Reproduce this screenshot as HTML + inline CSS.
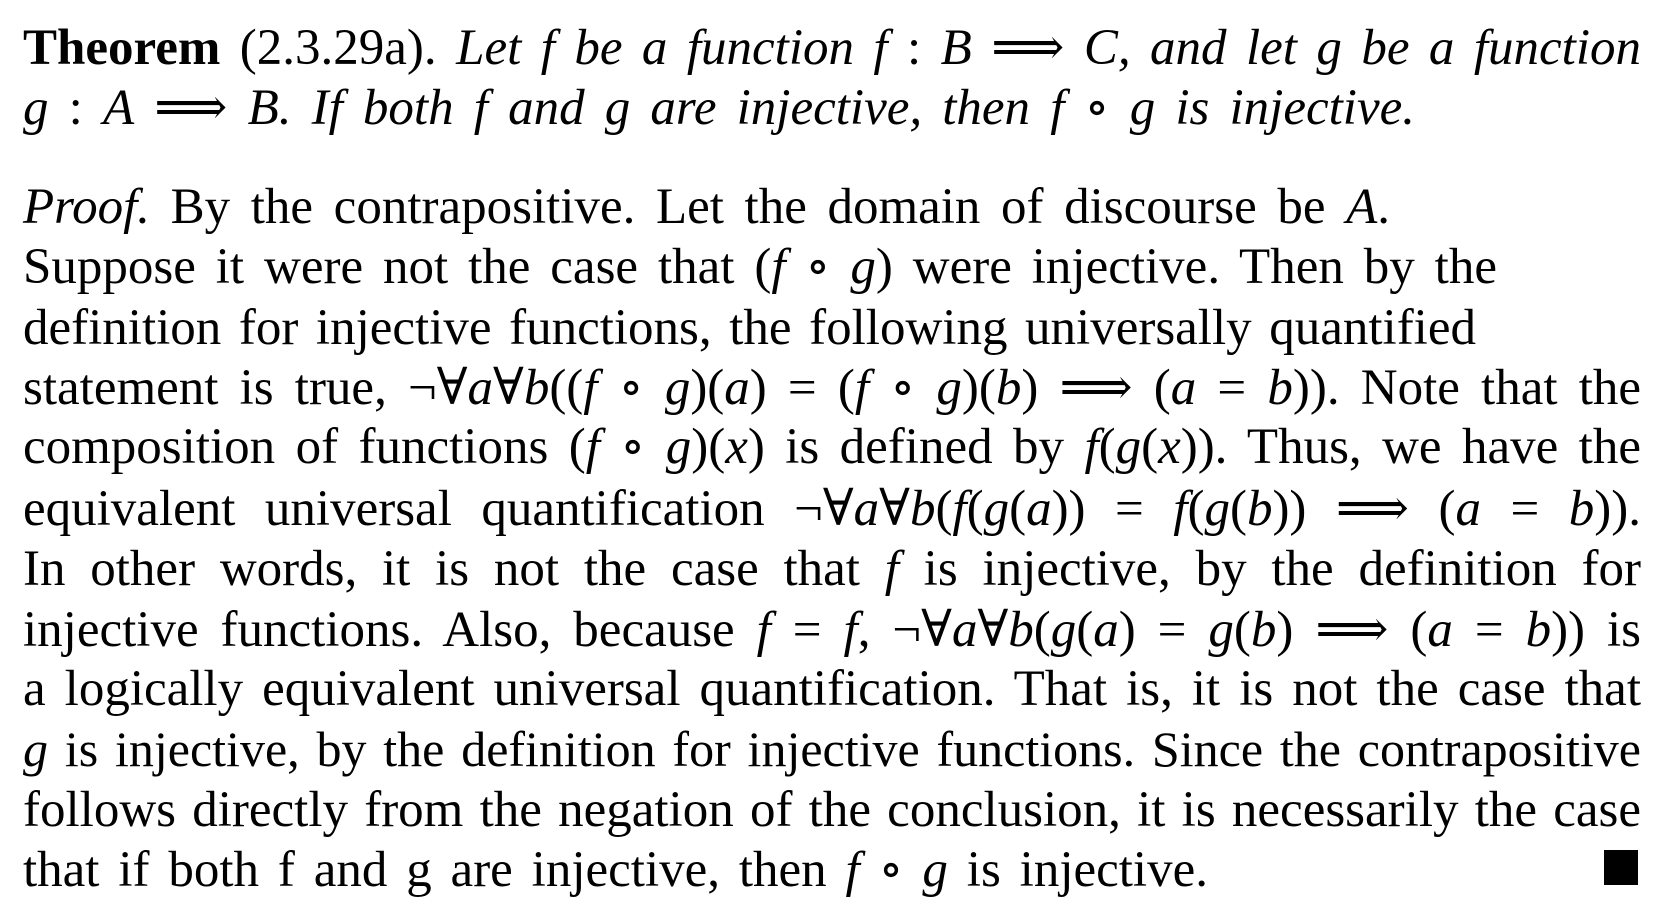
<!DOCTYPE html>
<html><head><meta charset="utf-8"><style>
html,body{margin:0;padding:0;background:#fff;width:1662px;height:918px;overflow:hidden}
.l{position:absolute;left:23px;height:60px;line-height:60px;font-family:"Liberation Serif","DejaVu Serif",serif;font-size:51px;color:#000;white-space:normal;text-align:justify;text-align-last:justify;overflow:visible}
i{font-style:italic}
b{font-weight:bold}
.sq{position:absolute;left:1604px;top:850px;width:34px;height:35px;background:#000}
</style></head><body>
<div class="l" style="top:18px;width:1618px"><b>Theorem</b> (2.3.29a). <i>Let f be a function f</i> : <i>B</i> ⟹ <i>C, and let g be a function</i></div>
<div class="l" style="top:78px;width:1392px"><i>g</i> : <i>A</i> ⟹ <i>B. If both f and g are injective, then f</i> ∘ <i>g is injective.</i></div>
<div class="l" style="top:177px;width:1367px"><i>Proof.</i> By the contrapositive. Let the domain of discourse be <i>A</i>.</div>
<div class="l" style="top:237px;width:1474px">Suppose it were not the case that (<i>f</i> ∘ <i>g</i>) were injective. Then by the</div>
<div class="l" style="top:298px;width:1453px">definition for injective functions, the following universally quantified</div>
<div class="l" style="top:358px;width:1618px">statement is true, ¬∀<i>a</i>∀<i>b</i>((<i>f</i> ∘ <i>g</i>)(<i>a</i>) = (<i>f</i> ∘ <i>g</i>)(<i>b</i>) ⟹ (<i>a</i> = <i>b</i>)). Note that the</div>
<div class="l" style="top:417px;width:1618px">composition of functions (<i>f</i> ∘ <i>g</i>)(<i>x</i>) is defined by <i>f</i>(<i>g</i>(<i>x</i>)). Thus, we have the</div>
<div class="l" style="top:479px;width:1618px">equivalent universal quantification ¬∀<i>a</i>∀<i>b</i>(<i>f</i>(<i>g</i>(<i>a</i>)) = <i>f</i>(<i>g</i>(<i>b</i>)) ⟹ (<i>a</i> = <i>b</i>)).</div>
<div class="l" style="top:539px;width:1618px">In other words, it is not the case that <i>f</i> is injective, by the definition for</div>
<div class="l" style="top:600px;width:1618px">injective functions. Also, because <i>f</i> = <i>f</i>, ¬∀<i>a</i>∀<i>b</i>(<i>g</i>(<i>a</i>) = <i>g</i>(<i>b</i>) ⟹ (<i>a</i> = <i>b</i>)) is</div>
<div class="l" style="top:659px;width:1618px">a logically equivalent universal quantification. That is, it is not the case that</div>
<div class="l" style="top:719px;width:1618px;font-size:50px"><i>g</i> is injective, by the definition for injective functions. Since the contrapositive</div>
<div class="l" style="top:780px;width:1618px">follows directly from the negation of the conclusion, it is necessarily the case</div>
<div class="l" style="top:840px;width:1185px">that if both f and g are injective, then <i>f</i> ∘ <i>g</i> is injective.</div>
<div class="sq"></div>
</body></html>
